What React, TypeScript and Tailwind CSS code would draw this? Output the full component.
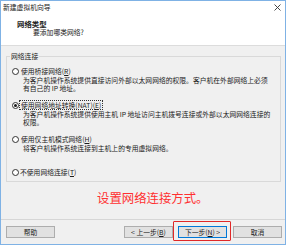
import React from "react";

function Radio({ checked }: { checked?: boolean }) {
  return (
    <span className="w-[7px] h-[7px] shrink-0 rounded-full border border-[#333333] bg-white flex items-center justify-center">
      {checked && <span className="w-[3px] h-[3px] rounded-full bg-[#1a1a1a]" />}
    </span>
  );
}

function Btn({ children, primary }: { children: React.ReactNode; primary?: boolean }) {
  return (
    <div
      className={
        "w-[49px] h-[12px] flex items-center justify-center text-[6.8px] leading-none bg-[#e1e1e1] border " +
        (primary ? "border-[#0078d7]" : "border-[#adadad]")
      }
    >
      {children}
    </div>
  );
}

export default function App() {
  return (
    <div className="w-[288px] h-[246px] bg-white font-[family-name:'Noto_Sans_CJK_SC',sans-serif] text-[#1a1a1a]">
      <div className="w-[286px] h-[245px] border border-[#7fb2e5] bg-[#f0f0f0] flex flex-col">
        {/* title bar */}
        <div className="h-[12px] bg-white flex items-center justify-between pl-[2px] pr-[4px]">
          <span className="text-[6.8px] leading-none text-[#222]">新建虚拟机向导</span>
          <svg width="7" height="7" viewBox="0 0 7 7" className="mt-[1px]">
            <path d="M0.5 0.5 L6.5 6.5 M6.5 0.5 L0.5 6.5" stroke="#333" strokeWidth="0.9" />
          </svg>
        </div>
        {/* header */}
        <div className="h-[33px] bg-white border-b border-[#dcdcdc] pt-[6px]">
          <div className="pl-[16px] text-[7.4px] leading-[9px] font-bold">网络类型</div>
          <div className="pl-[32px] text-[6.8px] leading-[9px]">要添加哪类网络?</div>
        </div>
        {/* body */}
        <div className="h-[136px] pt-[10px] pl-[5px] pr-[4px]">
          <div className="relative h-[126px] border border-[#d9d9d9]">
            <span className="absolute -top-[5px] left-[3px] bg-[#f0f0f0] px-[1px] text-[6.8px] leading-[9px]">
              网络连接
            </span>
            <div className="pt-[9px] pl-[5px] flex flex-col text-[6.8px]">
              <div className="h-[10px] flex items-center gap-[2px]">
                <Radio />
                <span className="leading-none">
                  使用桥接网络(<span className="underline">R</span>)
                </span>
              </div>
              <div className="pl-[11px] leading-[8px]">
                <div>为客户机操作系统提供直接访问外部以太网网络的权限。客户机在外部网络上必须</div>
                <div>有自己的 IP 地址。</div>
              </div>

              <div className="mt-[8px] h-[10px] flex items-center gap-[1px]">
                <Radio checked />
                <span className="leading-[8px] outline outline-1 outline-dotted outline-[#333] px-[1px]">
                  使用网络地址转换(NAT)(<span className="underline">E</span>)
                </span>
              </div>
              <div className="pl-[11px] leading-[8px]">
                <div>为客户机操作系统提供使用主机 IP 地址访问主机拨号连接或外部以太网网络连接的</div>
                <div>权限。</div>
              </div>

              <div className="mt-[8px] h-[10px] flex items-center gap-[2px]">
                <Radio />
                <span className="leading-none">
                  使用仅主机模式网络(<span className="underline">H</span>)
                </span>
              </div>
              <div className="pl-[11px] leading-[8px]">
                <div>将客户机操作系统连接到主机上的专用虚拟网络。</div>
              </div>

              <div className="mt-[15px] h-[10px] flex items-center gap-[1px]">
                <Radio />
                <span className="leading-none">
                  不使用网络连接(<span className="underline">T</span>)
                </span>
              </div>
            </div>
          </div>
        </div>
        {/* red note */}
        <div className="h-[37px] pt-[2px] pl-[96px]">
          <span className="text-[12.4px] leading-[12px] text-[#ff3030] whitespace-nowrap">设置网络连接方式。</span>
        </div>
        {/* separator */}
        <div className="h-px bg-[#d6d6d6]" />
        {/* buttons */}
        <div className="pt-[6px] pl-[5px] pr-[3px] flex items-center">
          <Btn>帮助</Btn>
          <div className="flex-1" />
          <Btn>&lt; 上一步(<span className="underline">B</span>)</Btn>
          <div className="relative ml-[5px]">
            <Btn primary>
              下一步(<span className="underline">N</span>) &gt;
            </Btn>
            <div className="absolute -left-[5px] -right-[4px] -top-[5px] -bottom-[3px] border-[1.5px] border-[#e02828] rounded-[1px]" />
          </div>
          <div className="ml-[6px]">
            <Btn>取消</Btn>
          </div>
        </div>
      </div>
    </div>
  );
}
